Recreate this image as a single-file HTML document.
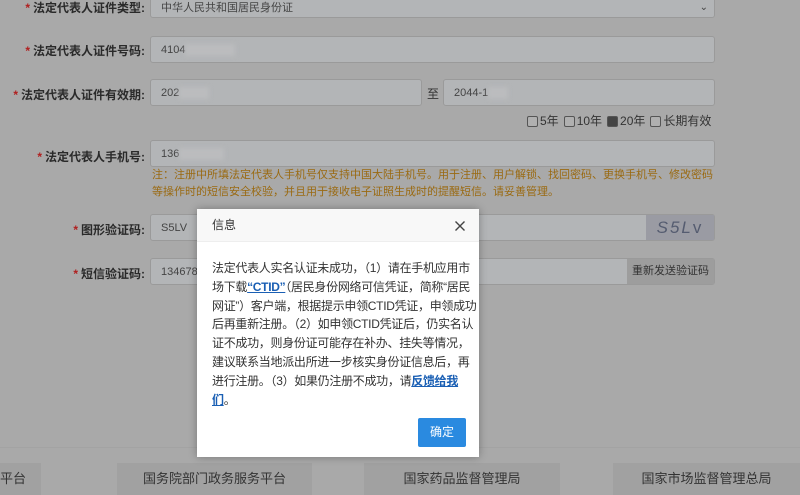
<!DOCTYPE html>
<html><head><meta charset="utf-8"><style>
*{margin:0;padding:0;box-sizing:border-box}
body{width:800px;height:495px;overflow:hidden;background:#a9a9a9;font-family:"Liberation Sans","Noto Sans CJK SC",sans-serif;position:relative;color:#333}
.a{position:absolute}
.lbl{position:absolute;font-size:12px;color:#2a2a2a;text-align:right;width:145px;left:0;font-weight:bold}
.lbl b{color:#b02020;margin-right:3px}
.inp{position:absolute;background:#b3b5b7;border:1px solid #9a9a9a;border-radius:3px;font-size:11px;color:#444;padding-left:10px;line-height:26px}
.blur{display:inline-block;width:50px;height:12px;background:#bbbcbe;vertical-align:middle;filter:blur(2px)}
.cb{display:inline-block;width:11px;height:11px;border:1px solid #555;border-radius:2px;vertical-align:-2px;margin:0 2px 0 5px;background:#b0b0b0}
.foot{position:absolute;top:463px;height:32px;background:#a1a1a1;font-size:13px;color:#333;text-align:center;line-height:32px}
.modal{position:absolute;left:197px;top:209px;width:282px;height:248px;background:#fff;box-shadow:0 0 8px rgba(0,0,0,.3)}
.mh{height:33px;background:#f8f8f8;border-bottom:1px solid #eee;font-size:12px;line-height:33px;padding-left:15px;color:#333}
.mb{padding:17px 0 0 15px;font-size:12px;line-height:18.8px;color:#333;white-space:nowrap;letter-spacing:-0.3px}
.mb a{color:#1a5fb4;font-weight:bold;text-decoration:underline}
.btn{position:absolute;left:221px;top:209px;width:48px;height:29px;background:#2a8ae0;color:#fff;font-size:12px;line-height:29px;text-align:center;border-radius:2px}
</style></head><body>
<div class="lbl" style="top:-1px"><b>*</b>法定代表人证件类型:</div>
<div class="inp" style="left:150px;top:-6px;width:565px;height:24px;line-height:22px;padding-top:2px">中华人民共和国居民身份证<span class="a" style="right:6px;top:2px;font-size:10px">⌄</span></div>
<div class="lbl" style="top:42px"><b>*</b>法定代表人证件号码:</div>
<div class="inp" style="left:150px;top:36px;width:565px;height:27px">4104<span class="blur"></span></div>
<div class="lbl" style="top:86px"><b>*</b>法定代表人证件有效期:</div>
<div class="inp" style="left:150px;top:79px;width:272px;height:27px">202<span class="blur" style="width:30px"></span></div>
<div class="a" style="left:427px;top:85px;font-size:12px;color:#333">至</div>
<div class="inp" style="left:443px;top:79px;width:272px;height:27px">2044-1<span class="blur" style="width:20px"></span></div>
<div class="a" style="left:522px;top:112px;font-size:12px;color:#333"><span class="cb"></span>5年<span class="cb"></span>10年<span class="cb" style="background:#444"></span>20年<span class="cb"></span>长期有效</div>
<div class="lbl" style="top:148px"><b>*</b>法定代表人手机号:</div>
<div class="inp" style="left:150px;top:140px;width:565px;height:27px">136<span class="blur" style="width:45px"></span></div>
<div class="a" style="left:152px;top:167px;width:570px;font-size:11px;line-height:17px;color:#9a6a12">注：注册中所填法定代表人手机号仅支持中国大陆手机号。用于注册、用户解锁、找回密码、更换手机号、修改密码等操作时的短信安全校验，并且用于接收电子证照生成时的提醒短信。请妥善管理。</div>
<div class="lbl" style="top:221px"><b>*</b>图形验证码:</div>
<div class="inp" style="left:150px;top:214px;width:565px;height:27px">S5LV</div>
<div class="a" style="left:646px;top:215px;width:68px;height:25px;background:#9a9ba3;font-style:italic;font-size:17px;color:#555c70;text-align:center;line-height:25px;letter-spacing:2px">S5L<span style="font-style:normal">v</span></div>
<div class="lbl" style="top:265px"><b>*</b>短信验证码:</div>
<div class="inp" style="left:150px;top:258px;width:565px;height:27px">134678</div>
<div class="a" style="left:627px;top:259px;width:87px;height:25px;background:#9d9d9d;font-size:11px;color:#333;line-height:25px;text-align:center">重新发送验证码</div>
<div class="a" style="left:0;top:447px;width:800px;height:1px;background:#a3a3a3"></div>
<div class="foot" style="left:0;width:41px;text-align:left">平台</div>
<div class="foot" style="left:117px;width:195px">国务院部门政务服务平台</div>
<div class="foot" style="left:364px;width:196px">国家药品监督管理局</div>
<div class="foot" style="left:613px;width:187px">国家市场监督管理总局</div>
<div class="modal">
<div class="mh">信息<svg class="a" style="right:14px;top:12px" width="10" height="10" viewBox="0 0 10 10"><path d="M0.5 0.5L9.5 9.5M9.5 0.5L0.5 9.5" stroke="#444" stroke-width="1.4"/></svg></div>
<div class="mb">法定代表人实名认证未成功，（1）请在手机应用市<br>场下载<a>“CTID”</a>（居民身份网络可信凭证，简称“居民<br>网证”）客户端，根据提示申领CTID凭证，申领成功<br>后再重新注册。（2）如申领CTID凭证后，仍实名认<br>证不成功，则身份证可能存在补办、挂失等情况，<br>建议联系当地派出所进一步核实身份证信息后，再<br>进行注册。（3）如果仍注册不成功，请<a>反馈给我<br>们</a>。</div>
<div class="btn">确定</div>
</div>
</body></html>
